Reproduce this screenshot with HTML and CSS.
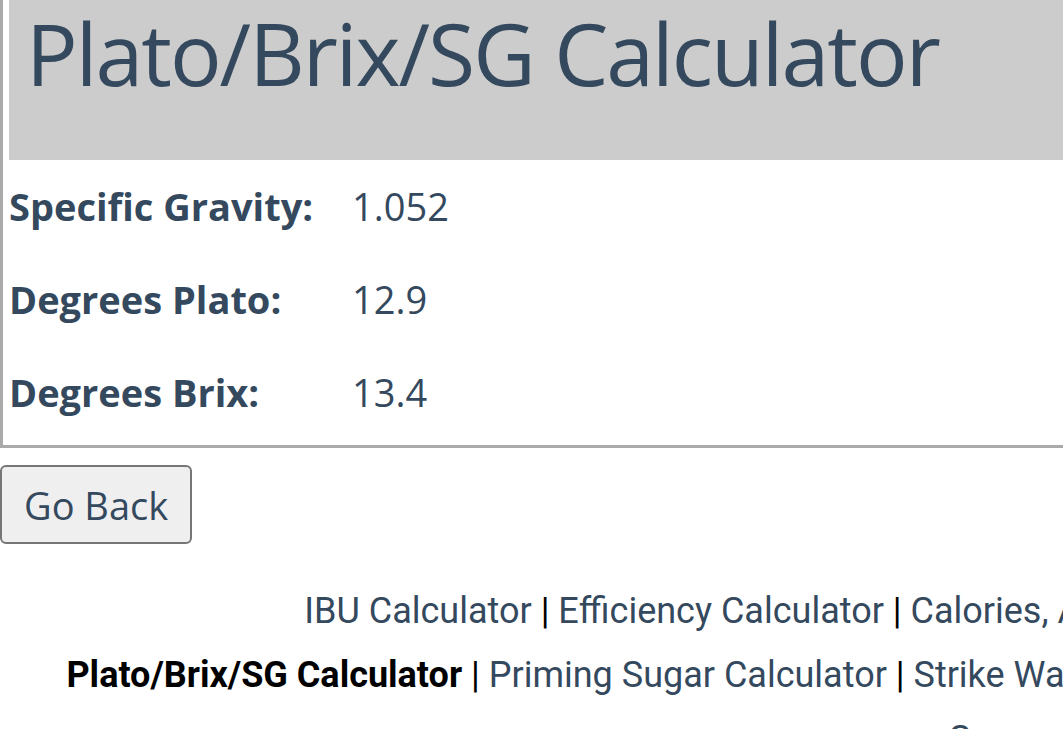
FILE: index.html
```html
<!DOCTYPE html>
<html>
<head>
<link rel="stylesheet" href="styles.css">
</head>
<body>

<div class="page">
  <div class="calc-box">
    <h1 class="calc-title">Plato/Brix/SG Calculator</h1>

    <div class="results">
      <div class="label">Specific Gravity:</div>
      <div class="value">1.052</div>
      <div class="label">Degrees Plato:</div>
      <div class="value">12.9</div>
      <div class="label">Degrees Brix:</div>
      <div class="value">13.4</div>
    </div>
  </div>

  <button class="back-button" onclick="history.back()">Go Back</button>

  <div class="footer-links">
    <p>
      <a href="#">IBU Calculator</a> | <a href="#">Efficiency Calculator</a> | <a href="#">Calories, ABV Calculator</a> | <a href="#">Hydrometer Temperature Correction</a>
    </p>
    <p>
      <b>Plato/Brix/SG Calculator</b> | <a href="#">Priming Sugar Calculator</a> | <a href="#">Strike Water Calculator</a> | <a href="#">Mash Water Volume Calculator</a> | <a href="#">Yeast Pitching Rate</a>
    </p>
    <p>
      <a href="#">Converting Recipes</a>
    </p>
  </div>
</div>

</body>
</html>
```

FILE: styles.css
```css
body {
  margin: 0;
  font-family: "Open Sans", sans-serif;
  color: #34495e;
  background-color: #fff;
  overflow: hidden;
}

.page {
  width: 2205px;
}

.calc-box {
  border-left: 3px solid #aaa;
  border-bottom: 3px solid #aaa;
  padding: 0 0 6px 6px;
}

.calc-title {
  margin: 0;
  background-color: #ccc;
  font-size: 86px;
  font-weight: normal;
  line-height: 106px;
  height: 160px;
  padding-left: 17px;
  box-sizing: border-box;
  letter-spacing: -2px;
}

.results {
  display: grid;
  grid-template-columns: 343px auto;
  font-size: 38px;
  line-height: 93px;
}

.label {
  font-weight: bold;
}

.back-button {
  display: block;
  margin: 17px 0 0 0;
  padding: 0 22px;
  height: 79px;
  font-family: "Open Sans", sans-serif;
  font-size: 38px;
  color: #34495e;
  background-color: #efefef;
  border: 2px solid #767676;
  border-radius: 6px;
}

.footer-links {
  margin-top: 35px;
  font-family: Roboto, sans-serif;
  font-size: 36px;
  line-height: 64px;
  color: #000;
  text-align: center;
}

.footer-links p {
  margin: 0;
  white-space: nowrap;
}

.footer-links a {
  color: #34495e;
  text-decoration: none;
}
```
